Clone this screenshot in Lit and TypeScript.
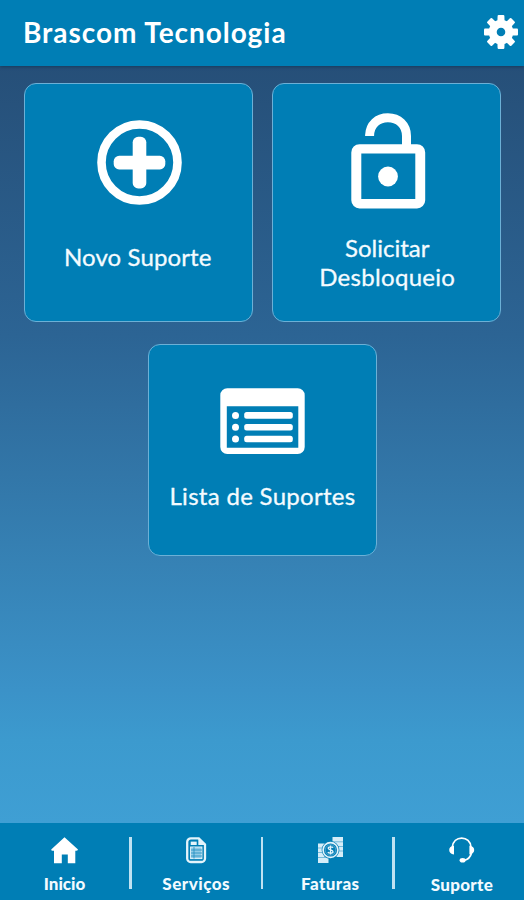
import { LitElement, html, css, svg } from "lit";
import { customElement, property } from "lit/decorators.js";

const plus = svg`
  <circle cx="42.5" cy="42.5" r="38" fill="none" stroke="#fff" stroke-width="8.6"/>
  <rect x="16.7" y="35.8" width="51.6" height="13.6" rx="5.5" fill="#fff"/>
  <rect x="35.7" y="16.8" width="13.6" height="51.6" rx="5.5" fill="#fff"/>`;

const lock = svg`
  <path d="M18.6 23V22.2C19 11.5 26.5 4.7 36.9 4.7C47.5 4.7 55.5 12 55.5 23V34" fill="none" stroke="#fff" stroke-width="9"/>
  <path fill="#fff" fill-rule="evenodd" d="M8.5 31.2H66A8.2 8.2 0 0 1 74.2 39.4V87.3A8.2 8.2 0 0 1 66 95.5H8.5A8.2 8.2 0 0 1 .3 87.3V39.4A8.2 8.2 0 0 1 8.5 31.2ZM10.3 40.4V86H64.3V40.4Z"/>
  <circle cx="37" cy="63.5" r="9.9" fill="#fff"/>`;

const list = svg`
  <path fill="#fff" fill-rule="evenodd" d="M7.3 .2H77.7A7 7 0 0 1 84.7 7.2V59A7 7 0 0 1 77.7 66H7.3A7 7 0 0 1 .3 59V7.2A7 7 0 0 1 7.3 .2ZM6.8 18.2V59.8H78.3V18.2Z"/>
  ${[27.4, 39.2, 51].map(
    (y) => svg`<circle cx="15.5" cy=${y} r="3.5" fill="#fff"/>
      <rect x="24.2" y=${y - 3.3} width="48.6" height="6.6" rx="2.5" fill="#fff"/>`
  )}`;

const gear = svg`
  <circle cx="17" cy="17" r="8.3" fill="none" stroke="#fff" stroke-width="8"/>
  ${[0, 45, 90, 135].map(
    (a) => svg`<g transform="rotate(${a} 17 17)" fill="#fff">
      <path d="M13.4 7L13.6 1Q13.7 0 14.6 0H19.4Q20.3 0 20.4 1L20.6 7Z"/>
      <path d="M13.4 27L13.6 33Q13.7 34 14.6 34H19.4Q20.3 34 20.4 33L20.6 27Z"/></g>`
  )}`;

const home = svg`<path fill="#fff" d="M13.5 .2L27 12.5Q26.8 13.8 25 13.8H24.3V26.3H16.8V17.5H10.8V26.3H3V13.8H1.5Q.2 13.5 .2 12.4Z"/>`;

const invoice = svg`
  <path d="M5 1.3H12.8L19 7.5V21.5A3.5 3.5 0 0 1 15.5 25H4.7A3.5 3.5 0 0 1 1.2 21.5V5A3.7 3.7 0 0 1 5 1.3Z" fill="none" stroke="#e4f4fb" stroke-width="2.3"/>
  <path d="M12.3 1V8H19.5Z" fill="#e4f4fb"/>
  <rect x="4.7" y="4.6" width="6" height="3.4" fill="#e4f4fb"/>
  <rect x="4.6" y="10" width="11.3" height="11.6" fill="#8fcbe6" stroke="#e4f4fb" stroke-width="1"/>
  <path d="M8 10V21.6M5 13H16M5 16H16M5 19H16" stroke="#1f8dc0" stroke-width=".8"/>`;

const money = svg`
  <path fill="#d5edf8" d="M14.5 0H25V20H17V6H14.5ZM0 6.5H9V20.5H10.5V26H0Z"/>
  <path d="M14 4.8H25M18 9.5H25M18 14H25M0 11H8M0 15.5H8M0 20.5H11" stroke="#4ba5cf" stroke-width=".7"/>
  <circle cx="12.5" cy="13" r="8.9" fill="#0880b7"/>
  <circle cx="12.5" cy="13" r="7.4" fill="#0880b7" stroke="#e4f4fb" stroke-width="1.6"/>
  <circle cx="12.5" cy="13" r="5.3" fill="none" stroke="#6db9dc" stroke-width=".6"/>
  <path d="M15 10.8C14.5 9.5 10.2 9.3 10.2 11.3C10.2 13.5 15 12.3 15 14.7C15 16.7 10.5 16.6 9.9 15M12.5 8.5V17.5" fill="none" stroke="#e4f4fb" stroke-width="1.3"/>`;

const headset = svg`
  <path d="M3.3 10C4 4.5 7.8 1.1 12.7 1.1S21.5 4.5 22 10M22.5 16C21.5 20 19 22.7 15 23.3" fill="none" stroke="#fff" stroke-width="1.7"/>
  <path fill="#fff" d="M5 8.8V17.5C2 17.3 .2 15.5 .2 13S2 9 5 8.8ZM20.4 8.8V17.5C23.4 17.3 25.2 15.5 25.2 13S23.4 9 20.4 8.8Z"/>
  <ellipse cx="13.6" cy="23.3" rx="3" ry="2.3" fill="#fff"/>`;

@customElement("support-card")
class SupportCard extends LitElement {
  @property() kind = "";
  static styles = css`
    :host {
      box-sizing: border-box;
      display: flex;
      flex-direction: column;
      align-items: center;
      width: 229px;
      height: 239px;
      border: 1.5px solid #6cb0d6;
      border-radius: 12px;
      background: #007eb5;
      color: #f4fbff;
      font-size: 24px;
      line-height: 29px;
      text-align: center;
      -webkit-text-stroke: 0.3px #f4fbff;
    }
    :host([kind="new"]) { padding: 36px 0 0 2px; gap: 37px; }
    :host([kind="unlock"]) { padding: 29px 0 0 4px; gap: 24px; }
    :host([kind="list"]) { height: 212px; padding-top: 43px; gap: 26px; }
    svg { display: block; flex: none; }
    .label { white-space: nowrap; }
    :host([kind="new"]) .label,
    :host([kind="unlock"]) .label { margin-right: 3px; }
  `;
  render() {
    const art =
      this.kind === "new"
        ? html`<svg width="85" height="85">${plus}</svg>`
        : this.kind === "unlock"
          ? html`<svg width="75" height="96">${lock}</svg>`
          : html`<svg width="85" height="67">${list}</svg>`;
    return html`${art}<div class="label"><slot></slot></div>`;
  }
}

@customElement("app-root")
class AppRoot extends LitElement {
  static styles = css`
    :host {
      display: flex;
      flex-direction: column;
      height: 900px;
      overflow: hidden;
      font-family: Lato, "Open Sans", sans-serif;
      background: linear-gradient(#264f78 66px, #2c6494 335px, #3682b5 565px, #3b92c8 690px, #3c9ace 740px, #3f9fd4 823px);
    }
    header {
      box-sizing: border-box;
      display: flex;
      align-items: center;
      justify-content: space-between;
      flex: none;
      height: 66px;
      padding: 0 6px 2px 23px;
      background: #007eb5;
      box-shadow: 0 1px 3px #173b5c;
      color: #fff;
    }
    h1 { margin: 0; font-size: 28px; font-weight: 700; line-height: 34px; letter-spacing: 0.95px; white-space: nowrap; }
    main {
      flex: 1;
      display: flex;
      flex-wrap: wrap;
      justify-content: center;
      align-content: flex-start;
      gap: 21.5px 19.5px;
      padding: 17px 20px 0 21px;
    }
    .novo { letter-spacing: 0.1px; }
    .des { letter-spacing: 0.3px; }
    .lis { letter-spacing: 0.3px; }
    nav {
      box-sizing: border-box;
      display: flex;
      flex: none;
      height: 77px;
      padding-top: 14px;
      background: #007eb5;
      color: #f2faff;
      font-size: 17px;
      font-weight: 900;
      line-height: 20px;
    }
    .item { display: flex; flex-direction: column; align-items: center; gap: 10px; width: 129.5px; }
    .item svg { display: block; }
    .services { letter-spacing: 0.5px; }
    .bills { box-sizing: border-box; padding-left: 5px; letter-spacing: 0.4px; }
    .help { box-sizing: border-box; padding-left: 5px; letter-spacing: 0.3px; gap: 11px; }
    .rule { flex: none; width: 2.5px; height: 52px; background: #bfe2f2; }
  `;
  render() {
    return html`
      <header>
        <h1>Brascom Tecnologia</h1>
        <svg width="34" height="34">${gear}</svg>
      </header>
      <main>
        <support-card kind="new"><span class="novo">Novo Suporte</span></support-card>
        <support-card kind="unlock">Solicitar<br /><span class="des">Desbloqueio</span></support-card>
        <support-card kind="list"><span class="lis">Lista de Suportes</span></support-card>
      </main>
      <nav>
        <div class="item"><svg width="27" height="27">${home}</svg><span>Inicio</span></div>
        <div class="rule"></div>
        <div class="item services"><svg width="21" height="27">${invoice}</svg><span>Serviços</span></div>
        <div class="rule"></div>
        <div class="item bills"><svg width="25" height="27">${money}</svg><span>Faturas</span></div>
        <div class="rule"></div>
        <div class="item help"><svg width="26" height="27">${headset}</svg><span>Suporte</span></div>
      </nav>
    `;
  }
}
